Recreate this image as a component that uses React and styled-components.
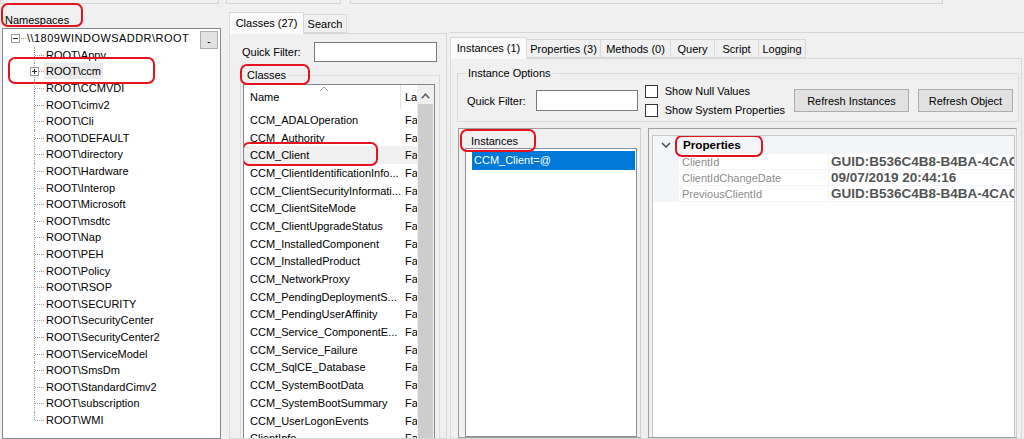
import React from 'react';
import styled, { createGlobalStyle } from 'styled-components';

const namespaces = [
    'Appv', 'ccm', 'CCMVDI', 'cimv2', 'Cli', 'DEFAULT', 'directory', 'Hardware', 'Interop',
    'Microsoft', 'msdtc', 'Nap', 'PEH', 'Policy', 'RSOP', 'SECURITY', 'SecurityCenter',
    'SecurityCenter2', 'ServiceModel', 'SmsDm', 'StandardCimv2', 'subscription', 'WMI',
];

const classes = [
    'CCM_ADALOperation', 'CCM_Authority', 'CCM_Client', 'CCM_ClientIdentificationInfo...',
    'CCM_ClientSecurityInformati...', 'CCM_ClientSiteMode', 'CCM_ClientUpgradeStatus',
    'CCM_InstalledComponent', 'CCM_InstalledProduct', 'CCM_NetworkProxy',
    'CCM_PendingDeploymentS...', 'CCM_PendingUserAffinity', 'CCM_Service_ComponentE...',
    'CCM_Service_Failure', 'CCM_SqlCE_Database', 'CCM_SystemBootData',
    'CCM_SystemBootSummary', 'CCM_UserLogonEvents', 'ClientInfo',
];

const properties = [
    { name: 'ClientId', value: 'GUID:B536C4B8-B4BA-4CAC-B7E8-5F1D2B3C4A10' },
    { name: 'ClientIdChangeDate', value: '09/07/2019 20:44:16' },
    { name: 'PreviousClientId', value: 'GUID:B536C4B8-B4BA-4CAC-B7E8-5F1D2B3C4A10' },
];

const rightTabs = [
    { label: 'Instances (1)', w: 77 },
    { label: 'Properties (3)', w: 75 },
    { label: 'Methods (0)', w: 71 },
    { label: 'Query', w: 45 },
    { label: 'Script', w: 45 },
    { label: 'Logging', w: 48 },
];

const App = () => {
    return (
    <Page>
        <GlobalStyle />
        <TopStrip>
            <Stub $w={219} />
            <Stub $w={115} $ml={7} />
            <Stub $w={593} $ml={9} />
        </TopStrip>
        <Main>
            <NamespacePane>
                <PaneLabel>
                    <Mark $t={-10} $r={-14} $b={0} $l={-4}>Namespaces</Mark>
                </PaneLabel>
                <Tree>
                    <TreeRow>
                        <Gutter $w={22}>
                            <Expander $left={8} />
                            <HDots $left={18} $w={5} />
                        </Gutter>
                        <TreeText $wide>\\1809WINDOWSADDR\ROOT</TreeText>
                    </TreeRow>
                    {namespaces.map((ns, i) => (
                        <TreeRow key={ns}>
                            <Gutter $w={41}>
                                <VDots $left={31} $last={i === namespaces.length - 1} />
                                <HDots $left={32} $w={9} />
                                {ns === 'ccm' && <Expander $left={27} $plus />}
                            </Gutter>
                            {ns === 'ccm' ? (
                                <Mark $t={-6} $r={-52} $b={-5} $l={-36}>
                                    <TreeText $selected>ROOT\{ns}</TreeText>
                                </Mark>
                            ) : (
                                <TreeText>ROOT\{ns}</TreeText>
                            )}
                        </TreeRow>
                    ))}
                    <DotsButton>-</DotsButton>
                </Tree>
            </NamespacePane>

            <ClassesPane>
                <TabStrip $top={8} $pad={2}>
                    <Tab $active $w={75}>Classes (27)</Tab>
                    <Tab $w={44}>Search</Tab>
                </TabStrip>
                <TabPage $mx={2}>
                    <FilterRow>
                        <span>Quick Filter:</span>
                        <TextBox $w={123} $h={20} />
                    </FilterRow>
                    <Group $m="6px 6px 0 10px">
                        <Legend>
                            <Mark $t={-4} $r={-24} $b={-3} $l={-7}>Classes</Mark>
                        </Legend>
                        <ListView>
                            <Columns>
                                <Header>
                                    <HeaderCell $w={157} $pad={6} $divider>
                                        Name
                                        <SortGlyph width="10" height="6" viewBox="0 0 10 6">
                                            <polyline points="1,5 5,1 9,5" fill="none" stroke="#9a9a9a" strokeWidth="1" />
                                        </SortGlyph>
                                    </HeaderCell>
                                    <HeaderCell $pad={4}>La</HeaderCell>
                                </Header>
                                <Rows>
                                    {classes.map((c) => (
                                        <ClassRow key={c} $hover={c === 'CCM_Client'}>
                                            <NameCell>
                                                {c === 'CCM_Client'
                                                    ? <Mark $t={-6} $r={-69} $b={-4} $l={-8}>{c}</Mark>
                                                    : c}
                                            </NameCell>
                                            <LazyCell>Fa</LazyCell>
                                        </ClassRow>
                                    ))}
                                </Rows>
                            </Columns>
                            <ScrollBar>
                                <ScrollArrow>
                                    <svg width="9" height="6" viewBox="0 0 9 6">
                                        <polyline points="0.8,5.2 4.5,1.2 8.2,5.2" fill="none" stroke="#606060" strokeWidth="1.6" />
                                    </svg>
                                </ScrollArrow>
                                <Thumb />
                            </ScrollBar>
                        </ListView>
                    </Group>
                </TabPage>
            </ClassesPane>

            <DetailPane>
                <TabStrip $top={4} $pad={0}>
                    {rightTabs.map((t, i) => <Tab key={t.label} $w={t.w} $active={i === 0}>{t.label}</Tab>)}
                </TabStrip>
                <TabPage $ml={0} $mr={2}>
                    <Group $m="7px 2px 0 6px">
                        <Legend $ml={6}>Instance Options</Legend>
                        <OptionsRow>
                            <span>Quick Filter:</span>
                            <TextBox $w={102} $h={21} $ml={10} />
                            <CheckColumn>
                                <CheckRow><CheckBox />Show Null Values</CheckRow>
                                <CheckRow><CheckBox />Show System Properties</CheckRow>
                            </CheckColumn>
                            <ButtonGroup>
                                <Button $w={115}>Refresh Instances</Button>
                                <Button $w={95}>Refresh Object</Button>
                            </ButtonGroup>
                        </OptionsRow>
                    </Group>
                    <Lower>
                        <InstancesPanel>
                            <PanelLabel>
                                <Mark $t={-5} $r={-18} $b={-4} $l={-11}>Instances</Mark>
                            </PanelLabel>
                            <ListBox>
                                <ListItem $selected>CCM_Client=@</ListItem>
                            </ListBox>
                        </InstancesPanel>
                        <PropsPanel>
                            <PropGrid>
                                <CategoryRow>
                                    <svg width="10" height="6" viewBox="0 0 10 6">
                                        <polyline points="1,1 5,5 9,1" fill="none" stroke="#4a4a4a" strokeWidth="1.5" />
                                    </svg>
                                    <CategoryTitle>
                                        <Mark $t={-3} $r={-22} $b={-5} $l={-8}>Properties</Mark>
                                    </CategoryTitle>
                                </CategoryRow>
                                {properties.map((p) => (
                                    <PropRow key={p.name}>
                                        <PropMargin />
                                        <PropName>{p.name}</PropName>
                                        <PropValue>{p.value}</PropValue>
                                    </PropRow>
                                ))}
                            </PropGrid>
                        </PropsPanel>
                    </Lower>
                </TabPage>
            </DetailPane>
        </Main>
    </Page>
    );
}

const GlobalStyle = createGlobalStyle`
    html, body {
        margin: 0;
        padding: 0;
        background: #f0f0f0;
    }
    body {
        font-family: "Liberation Sans", Arial, sans-serif;
        font-size: 11px;
        color: #000;
    }
    * {
        box-sizing: border-box;
    }
`;

const Page = styled.div`
    width: 1024px;
    height: 439px;
    overflow: hidden;
    background: #f0f0f0;
    display: flex;
    flex-direction: column;
`;

const TopStrip = styled.div`
    display: flex;
    height: 4px;
    flex-shrink: 0;
`;

const Stub = styled.div`
    width: ${p => p.$w}px;
    margin-left: ${p => p.$ml || 0}px;
    border: 1px solid #d6d6d6;
    border-top: none;
    background: #f0f0f0;
`;

const Main = styled.div`
    display: flex;
    flex: 1;
    min-height: 0;
`;

const Mark = styled.span`
    position: relative;
    display: inline-block;
    &::after {
        content: '';
        position: absolute;
        top: ${p => p.$t}px;
        right: ${p => p.$r}px;
        bottom: ${p => p.$b}px;
        left: ${p => p.$l}px;
        border: 2px solid #e3141d;
        border-radius: 7px;
        pointer-events: none;
    }
`;

/* namespaces */

const NamespacePane = styled.div`
    width: 221px;
    flex-shrink: 0;
    display: flex;
    flex-direction: column;
`;

const PaneLabel = styled.div`
    height: 24px;
    padding: 9px 0 0 5px;
    line-height: 14px;
`;

const Tree = styled.div`
    position: relative;
    flex: 1;
    margin-left: 2px;
    padding-top: 1px;
    background: #fff;
    border: 1px solid #828790;
    overflow: hidden;
`;

const TreeRow = styled.div`
    display: flex;
    align-items: center;
    height: 16.6px;
    white-space: nowrap;
`;

const Gutter = styled.span`
    position: relative;
    align-self: stretch;
    width: ${p => p.$w}px;
    flex-shrink: 0;
`;

const VDots = styled.span`
    position: absolute;
    left: ${p => p.$left}px;
    top: 0;
    bottom: ${p => (p.$last ? '50%' : '0')};
    border-left: 1px dotted #a0a0a0;
`;

const HDots = styled.span`
    position: absolute;
    left: ${p => p.$left}px;
    width: ${p => p.$w}px;
    top: 50%;
    border-top: 1px dotted #a0a0a0;
`;

const Expander = styled.span`
    position: absolute;
    left: ${p => p.$left}px;
    top: 50%;
    width: 9px;
    height: 9px;
    margin-top: -4px;
    background: #fff;
    border: 1px solid #9a9a9a;
    z-index: 1;
    &::before {
        content: '';
        position: absolute;
        left: 1px;
        top: 3px;
        width: 5px;
        border-top: 1px solid #333;
    }
    &::after {
        content: '';
        display: ${p => (p.$plus ? 'block' : 'none')};
        position: absolute;
        left: 3px;
        top: 1px;
        height: 5px;
        border-left: 1px solid #333;
    }
`;

const TreeText = styled.span`
    display: inline-block;
    line-height: 14px;
    padding: 1px 2px;
    letter-spacing: ${p => (p.$wide ? '0.45px' : '0')};
    background: ${p => (p.$selected ? '#ebebeb' : 'transparent')};
`;

const DotsButton = styled.div`
    position: absolute;
    top: 2px;
    right: 2px;
    width: 18px;
    height: 18px;
    background: #e1e1e1;
    border: 1px solid #adadad;
    display: flex;
    align-items: center;
    justify-content: center;
    font-size: 10px;
    line-height: 1;
    padding-top: 3px;
`;

/* tabs */

const TabStrip = styled.div`
    display: flex;
    align-items: flex-end;
    height: 21px;
    margin-top: ${p => p.$top}px;
    padding-left: ${p => p.$pad}px;
    flex-shrink: 0;
    position: relative;
    z-index: 1;
`;

const Tab = styled.div`
    width: ${p => p.$w}px;
    height: ${p => (p.$active ? 22 : 19)}px;
    margin-bottom: ${p => (p.$active ? -1 : 0)}px;
    margin-right: -1px;
    display: flex;
    align-items: center;
    justify-content: center;
    padding-bottom: ${p => (p.$active ? 1 : 0)}px;
    background: ${p => (p.$active ? '#fafafa' : '#f0f0f0')};
    border: 1px solid #d9d9d9;
    border-bottom: ${p => (p.$active ? 'none' : '1px solid #d9d9d9')};
    white-space: nowrap;
`;

const TabPage = styled.div`
    flex: 1;
    min-height: 0;
    margin-left: ${p => (p.$ml ?? p.$mx ?? 0)}px;
    margin-right: ${p => (p.$mr ?? p.$mx ?? 0)}px;
    border: 1px solid #d9d9d9;
    background: #f0f0f0;
    display: flex;
    flex-direction: column;
    overflow: hidden;
`;

/* classes */

const ClassesPane = styled.div`
    width: 222px;
    margin-left: 6px;
    flex-shrink: 0;
    display: flex;
    flex-direction: column;
`;

const FilterRow = styled.div`
    display: flex;
    align-items: center;
    justify-content: space-between;
    margin-top: 8px;
    padding: 0 9px 0 12px;
    height: 20px;
    flex-shrink: 0;
`;

const TextBox = styled.div`
    width: ${p => p.$w}px;
    height: ${p => p.$h}px;
    margin-left: ${p => p.$ml || 0}px;
    background: #fff;
    border: 1px solid #7a7a7a;
    flex-shrink: 0;
`;

const Group = styled.fieldset`
    margin: ${p => p.$m};
    padding: 0 4px 0 2px;
    border: 1px solid #dcdcdc;
    min-width: 0;
    flex-shrink: 0;
`;

const Legend = styled.legend`
    margin-left: ${p => p.$ml ?? 2}px;
    padding: 0 2px;
    line-height: 14px;
`;

const ListView = styled.div`
    display: flex;
    height: 360px;
    margin-top: 2px;
    background: #fff;
    border: 1px solid #828790;
`;

const Columns = styled.div`
    flex: 1;
    min-width: 0;
    overflow: hidden;
`;

const Header = styled.div`
    display: flex;
    height: 24px;
`;

const HeaderCell = styled.div`
    position: relative;
    display: flex;
    align-items: center;
    width: ${p => (p.$w ? `${p.$w}px` : 'auto')};
    flex-shrink: 0;
    padding-left: ${p => p.$pad}px;
    border-right: ${p => (p.$divider ? '1px solid #e5e5e5' : 'none')};
    white-space: nowrap;
`;

const SortGlyph = styled.svg`
    position: absolute;
    left: 75px;
    top: 1px;
`;

const Rows = styled.div`
    padding-top: 2px;
`;

const ClassRow = styled.div`
    display: flex;
    align-items: center;
    height: 17.7px;
    background: ${p => (p.$hover ? '#f0f0f0' : 'transparent')};
    white-space: nowrap;
`;

const NameCell = styled.div`
    width: 157px;
    flex-shrink: 0;
    padding-left: 6px;
    line-height: 14px;
`;

const LazyCell = styled.div`
    padding-left: 4px;
`;

const ScrollBar = styled.div`
    width: 17px;
    flex-shrink: 0;
    display: flex;
    flex-direction: column;
    background: #f0f0f0;
`;

const ScrollArrow = styled.div`
    height: 19px;
    display: flex;
    align-items: center;
    justify-content: center;
    padding-top: 2px;
`;

const Thumb = styled.div`
    flex: 1;
    background: #cdcdcd;
    margin: 0 1px;
`;

/* instance details */

const DetailPane = styled.div`
    flex: 1;
    margin: 28px 0 0 1px;
    border-top: 1px solid #d6d6d6;
    display: flex;
    flex-direction: column;
    min-width: 0;
`;

const OptionsRow = styled.div`
    display: flex;
    align-items: center;
    height: 41px;
    padding: 0 1px 0 7px;
    white-space: nowrap;
`;

const CheckColumn = styled.div`
    display: flex;
    flex-direction: column;
    margin-left: 7px;
`;

const CheckRow = styled.div`
    display: flex;
    align-items: center;
    height: 19px;
`;

const CheckBox = styled.span`
    width: 13px;
    height: 13px;
    margin-right: 7px;
    background: #fff;
    border: 1px solid #333;
`;

const ButtonGroup = styled.div`
    display: flex;
    gap: 9px;
    margin-left: auto;
`;

const Button = styled.div`
    width: ${p => p.$w}px;
    height: 23px;
    display: flex;
    align-items: center;
    justify-content: center;
    background: #e1e1e1;
    border: 1px solid #adadad;
`;

const Lower = styled.div`
    display: flex;
    gap: 7px;
    flex: 1;
    margin-top: 6px;
    padding-left: 7px;
    min-height: 0;
`;

const InstancesPanel = styled.div`
    width: 183px;
    display: flex;
    flex-direction: column;
    border: 1px solid #a0a0a0;
    border-right-color: #d0d0d0;
    padding: 5px 3px 0 6px;
`;

const PanelLabel = styled.div`
    line-height: 14px;
    padding-left: 6px;
`;

const ListBox = styled.div`
    flex: 1;
    background: #fff;
    border: 1px solid #8a8f98;
    padding: 2px 1px 0 6px;
`;

const ListItem = styled.div`
    height: 19px;
    line-height: 19px;
    padding-left: 2px;
    color: ${p => (p.$selected ? '#fff' : '#000')};
    background: ${p => (p.$selected ? '#0078d7' : 'transparent')};
`;

const PropsPanel = styled.div`
    width: 369px;
    display: flex;
    flex-direction: column;
    border: 1px solid #a0a0a0;
    border-right-color: #d0d0d0;
    padding: 6px 1px 0 3px;
`;

const PropGrid = styled.div`
    flex: 1;
    background: #fff;
    border: 1px solid #c8c8c8;
    border-bottom: none;
    overflow: hidden;
`;

const CategoryRow = styled.div`
    display: flex;
    align-items: center;
    height: 18px;
    padding-left: 8px;
    background: #f3f5f8;
`;

const CategoryTitle = styled.span`
    margin-left: 12px;
    font-weight: bold;
    font-size: 11.7px;
    line-height: 14px;
`;

const PropRow = styled.div`
    display: flex;
    height: 16px;
    white-space: nowrap;
`;

const PropMargin = styled.div`
    width: 26px;
    flex-shrink: 0;
    background: #f3f5f8;
`;

const PropName = styled.div`
    width: 149px;
    flex-shrink: 0;
    padding-left: 3px;
    color: #8c8c8c;
    line-height: 16px;
    border-bottom: 1px solid #f3f5f8;
`;

const PropValue = styled.div`
    flex: 1;
    min-width: 0;
    overflow: hidden;
    padding-left: 2px;
    font-weight: bold;
    font-size: 13.5px;
    line-height: 16px;
    color: #545454;
    border-left: 1px solid #f3f5f8;
    border-bottom: 1px solid #f3f5f8;
`;

export default App;
